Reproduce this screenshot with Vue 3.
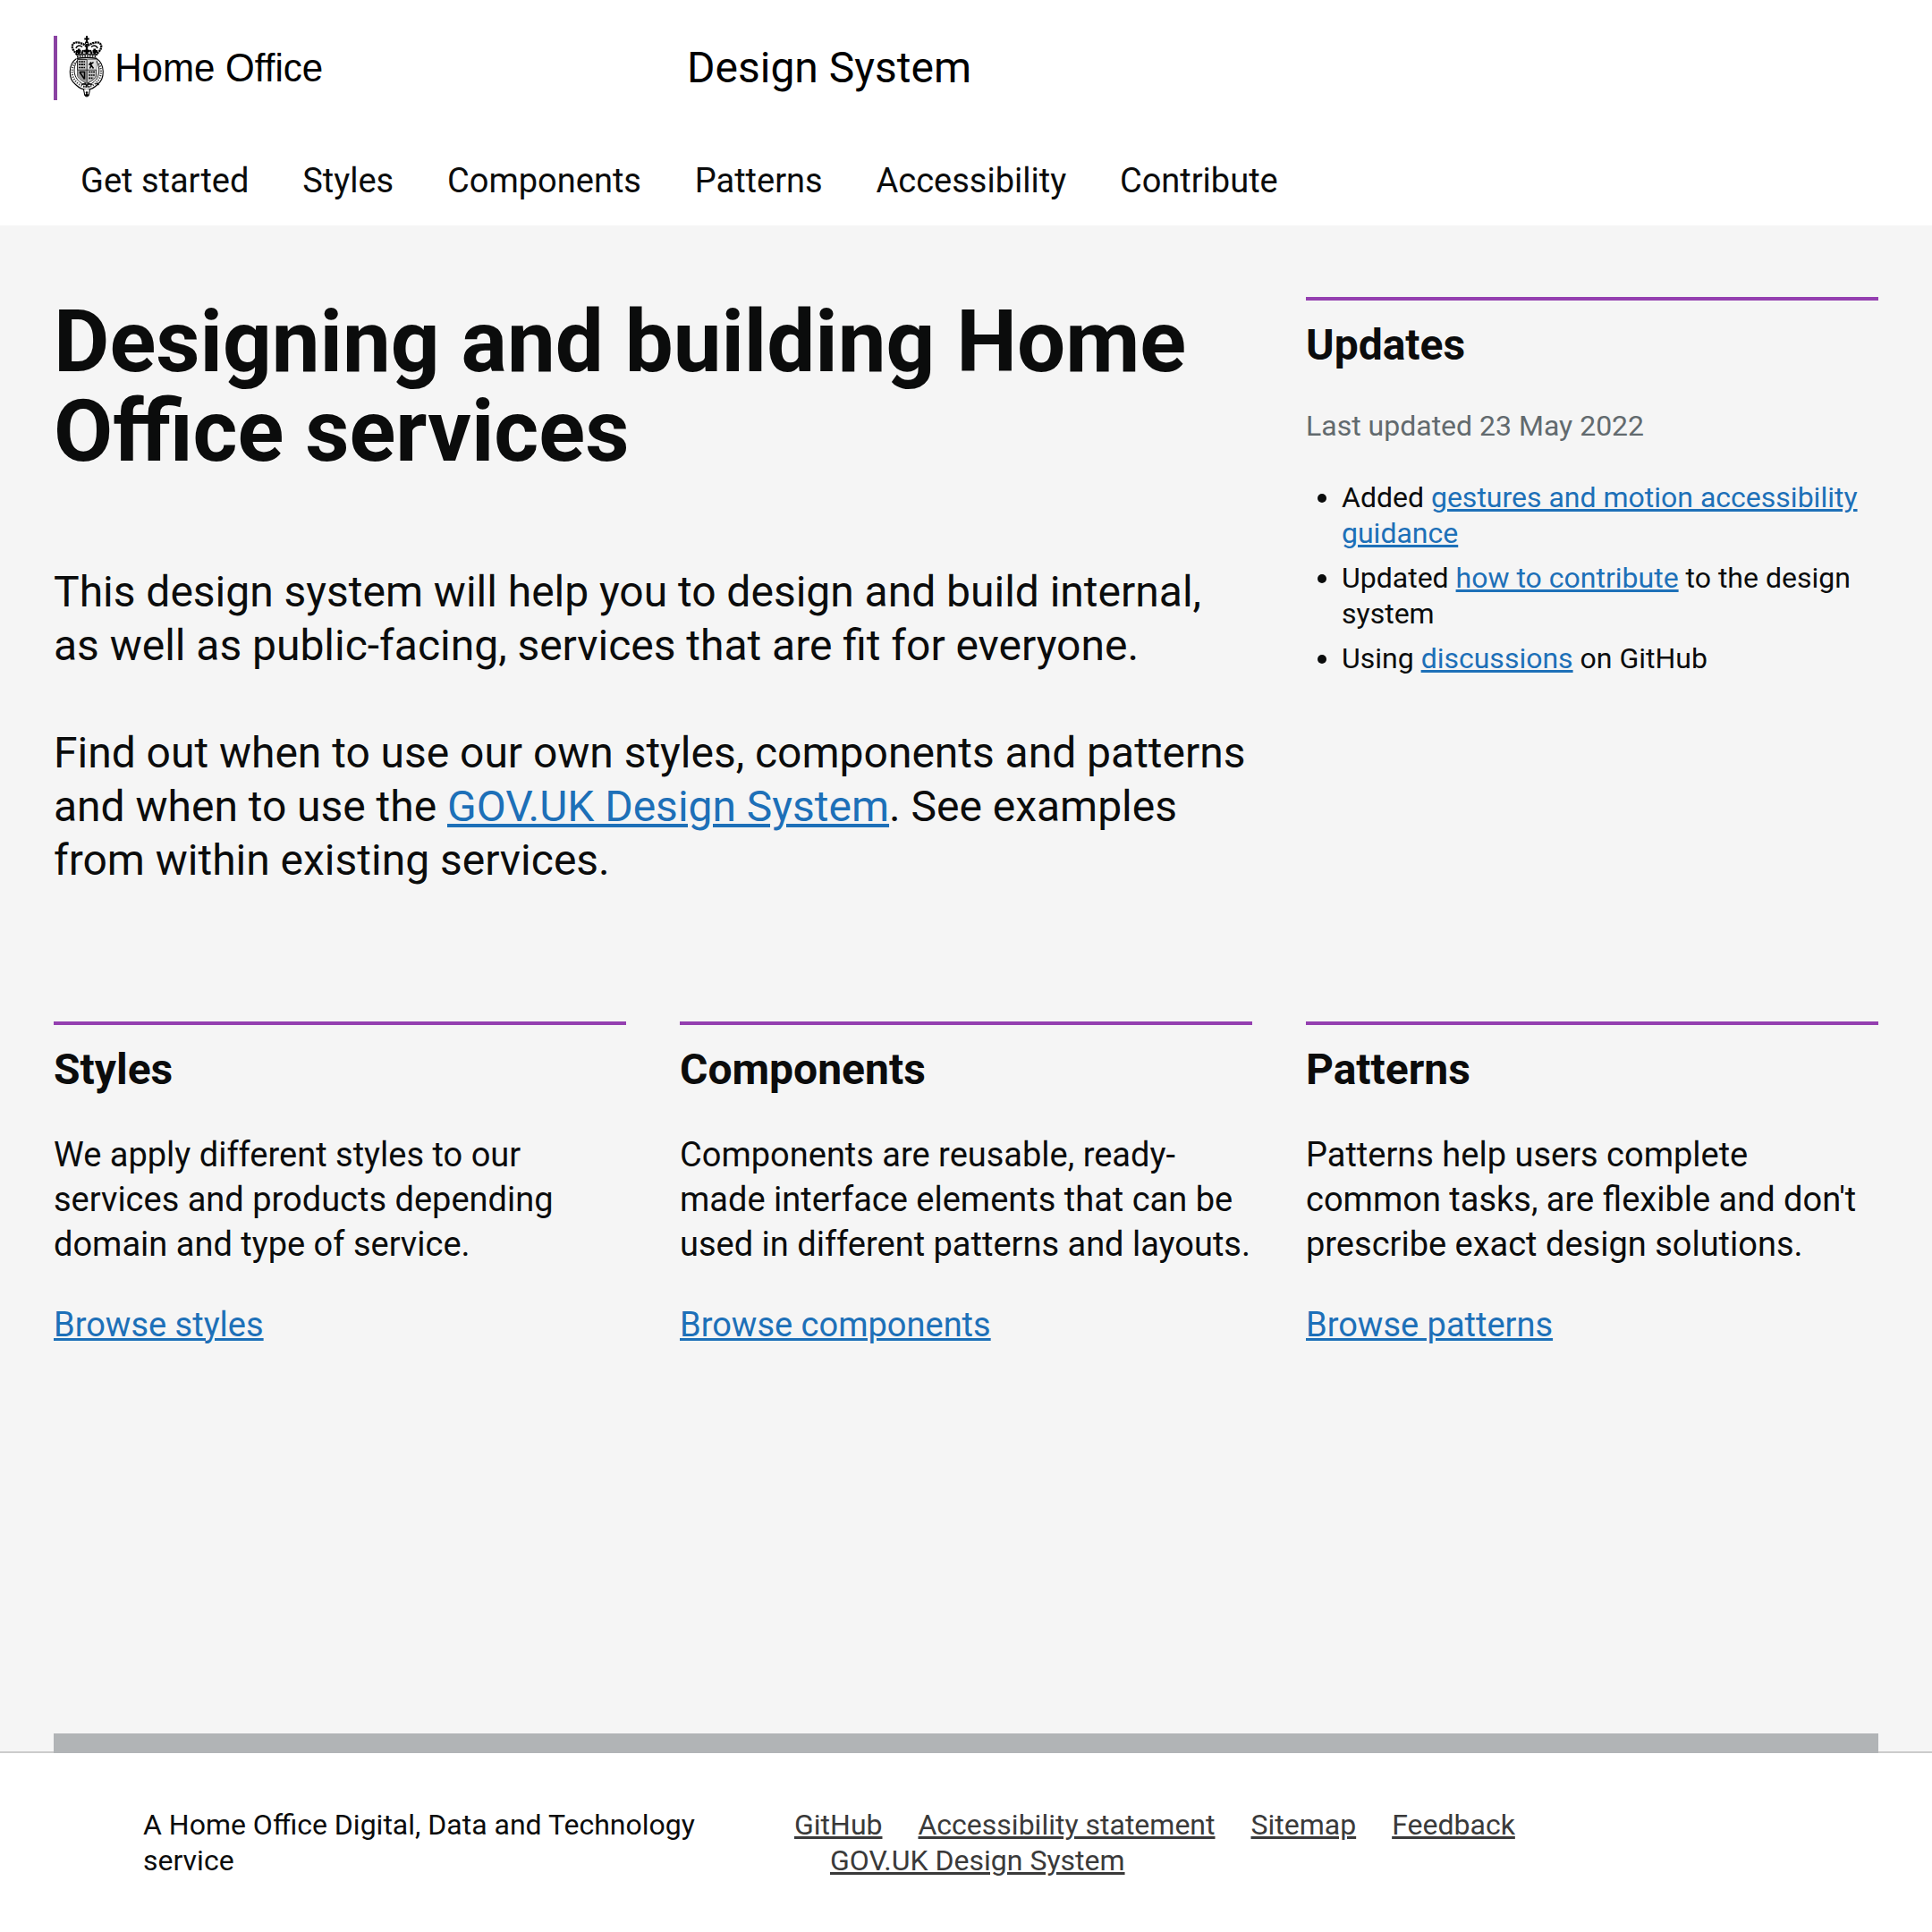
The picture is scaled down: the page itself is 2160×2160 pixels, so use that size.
<script setup>
const nav = ['Get started', 'Styles', 'Components', 'Patterns', 'Accessibility', 'Contribute']
const cards = [
  { title: 'Styles', text: 'We apply different styles to our services and products depending domain and type of service.', link: 'Browse styles' },
  { title: 'Components', text: 'Components are reusable, ready-made interface elements that can be used in different patterns and layouts.', link: 'Browse components' },
  { title: 'Patterns', text: "Patterns help users complete common tasks, are flexible and don't prescribe exact design solutions.", link: 'Browse patterns' }
]
const footerLinks = ['GitHub', 'Accessibility statement', 'Sitemap', 'Feedback', 'GOV.UK Design System']
</script>

<template>
  <div class="page">
    <header class="header">
      <div class="brand">
        <svg class="logo" width="304" height="72" viewBox="0 0 304 72" role="img" aria-label="Home Office">
          <rect width="4" height="72" fill="#8a42a2" />
          <g fill="none" stroke="#000">
            <!-- cross and orb -->
            <path d="M37 0v8M34.300 3.400h5.400" stroke-width="2" />
            <circle cx="37" cy="8.200" r="1.500" stroke-width="1.200" />
            <!-- crown arches -->
            <path d="M26 21C24 18 20.500 15.500 20.800 11.500C21 8 25 6.500 29 7.800C33 9 36 10.500 37 13C38 10.500 41 9 45 7.800C49 6.500 53 8 53.200 11.500C53.500 15.500 50 18 48 21" stroke-width="2.300" stroke-dasharray="2.200 .6" />
            <path d="M25 14C25.500 11 29 10 32 12.500M49 14C48.500 11 45 10 42 12.500M37 10v10" stroke-width="1.600" />
            <path d="M25 17.500h5.500M28.200 14.500v6M33.500 17.200h7M37 14.500v5.500M43.500 17.500h5.500M45.800 14.500v6" stroke-width="2.800" />
            <path d="M31.500 20l1.500-4M42.500 20l-1.500-4" stroke-width="2" />
            <!-- headband -->
            <path d="M25 21.300Q37 19.800 49 21.300M26 25.200Q37 23.800 48 25.200" stroke-width="1.500" />
            <path d="M26 23.300Q37 21.800 48 23.300" stroke-width="1.700" stroke-dasharray="1.600 1.200" />
            <!-- garter -->
            <path d="M25.500 25.500C16 32 16 48 24.500 54.500C28 58 33 60.200 37 60.200C41 60.200 45.500 58 49 54.500C57.500 48 57.500 32 48 25.500" stroke-width="1.100" />
            <path d="M23.500 30C18.500 38 20 48 27.500 53.500C33 58 41 58 46.500 53.500C53.500 48 55 38 50 30" stroke-width="2.200" stroke-dasharray="1.200 1.500" opacity=".75" />
            <path d="M26 28C21 37 22.500 46 29 51.500C34 56 40 56 45 51.500C51.500 46 52.500 37 48 28" stroke-width=".9" />
          </g>
          <!-- quartered shield -->
          <path d="M26.500 26.500H47.800V43C47.800 48.500 42 50.500 37.200 53.500C32.500 50.500 26.500 48.500 26.500 43Z" fill="#c4c4c4" stroke="#000" stroke-width=".8" />
          <path d="M37.200 26.500H47.800V38H37.200Z" fill="#dedede" />
          <path d="M26.500 38.500H37.200V53C32.500 50.500 26.500 48.500 26.500 43Z" fill="#999" />
          <g fill="none" stroke="#000">
            <path d="M28 29h7M28 32.200h7M28 35.500h7" stroke-width="1.700" stroke-dasharray="1.700 .7 2.500 .6" />
            <path d="M42 29.500l-2 2.500 2 1-1.500 3.500M41.500 32l3-2.500M42 33l2.500 3.500" stroke-width="1.500" />
            <path d="M39.300 40.500h7M39.300 44h6.500M39.300 47.300h5" stroke-width="1.700" stroke-dasharray="2 .7 1.500 .6" />
            <path d="M29 40.500L34.500 48.500M29 40.500h5.500v8" stroke-width="1.500" />
            <path d="M37.200 27v26M27 38.200h20.500" stroke-width=".7" />
            <!-- buckle and strap -->
            <path d="M31 55l4-2 2 3 2-3 4 2M33 57l8 0" stroke-width="1.100" />
            <path d="M33.500 60L34.800 66.500Q37 69.500 39.200 66.500L40.500 60" fill="#fff" stroke-width="1.100" />
            <path d="M47.500 53l3 2" stroke-width="1.500" />
          </g>
          <path d="M37 61.500l1.500 2.500h-1l1.700 2.500Q37 69 34.800 66.500L36.500 64h-1Z" fill="#000" />
          <text x="68.200" y="50.700" font-family="'Liberation Sans', Arial, sans-serif" font-size="43.500" textLength="233" lengthAdjust="spacingAndGlyphs">Home Office</text>
        </svg>
        <span class="product">Design System</span>
      </div>
      <nav class="nav">
        <a v-for="item in nav" :key="item" href="#">{{ item }}</a>
      </nav>
    </header>

    <main class="main">
      <div class="grid">
        <section class="intro">
          <h1>Designing and building Home Office services</h1>
          <p>This design system will help you to design and build internal, as well as public-facing, services that are fit for everyone.</p>
          <p>Find out when to use our own styles, components and patterns and when to use the <a class="link" href="#">GOV.UK Design System</a>. See examples from within existing services.</p>
        </section>
        <aside class="panel updates">
          <h2>Updates</h2>
          <p class="date">Last updated 23 May 2022</p>
          <ul>
            <li>Added <a class="link" href="#">gestures and motion accessibility guidance</a></li>
            <li>Updated <a class="link" href="#">how to contribute</a> to the design system</li>
            <li>Using <a class="link" href="#">discussions</a> on GitHub</li>
          </ul>
        </aside>
      </div>
      <div class="grid cards">
        <section v-for="card in cards" :key="card.title" class="panel">
          <h2>{{ card.title }}</h2>
          <p>{{ card.text }}</p>
          <p><a class="link" href="#">{{ card.link }}</a></p>
        </section>
      </div>
      <div class="rule"></div>
    </main>

    <footer class="footer">
      <p>A Home Office Digital, Data and Technology service</p>
      <ul>
        <li v-for="item in footerLinks" :key="item"><a href="#">{{ item }}</a></li>
      </ul>
    </footer>
  </div>
</template>

<style>
body {
  margin: 0;
}
</style>

<style scoped>
.page {
  display: flex;
  flex-direction: column;
  box-sizing: border-box;
  height: 2160px;
  background: #fff;
  color: #0b0c0c;
  font-family: Roboto, sans-serif;
  font-size: 38px;
  line-height: 50px;
}
h1, h2, p, ul {
  margin: 0;
  padding: 0;
}
.header {
  box-sizing: border-box;
  height: 252px;
  padding: 40px 60px 0;
}
.brand {
  display: flex;
  height: 72px;
}
.logo {
  flex: none;
  margin-right: 404px;
  overflow: visible;
}
.product {
  margin-top: 6px;
  color: #000;
  font-size: 48px;
  line-height: 60px;
}
.nav {
  display: flex;
  gap: 59.8px;
  padding: 65px 30px 0;
}
.nav a {
  color: inherit;
  text-decoration: none;
}
.main {
  display: flex;
  flex-direction: column;
  box-sizing: border-box;
  height: 1708px;
  padding: 80px 60px 0;
  background: #f5f5f5;
  border-bottom: 2px solid #ccc;
}
.grid {
  display: grid;
  grid-template-columns: repeat(3, 640px);
  column-gap: 60px;
}
.intro {
  grid-column: span 2;
  font-size: 48px;
  line-height: 60px;
}
.intro h1 {
  margin-bottom: 100px;
  font-size: 96px;
  font-weight: 700;
  line-height: 100px;
}
.intro p {
  word-spacing: -0.12px;
}
.intro p + p {
  margin-top: 60px;
}
.cards {
  margin-top: 150px;
}
.panel {
  padding-top: 20px;
  border-top: 4px solid #943fb0;
}
.panel h2 {
  font-size: 48px;
  font-weight: 700;
  line-height: 60px;
}
.panel p {
  margin-top: 40px;
}
.updates {
  font-size: 32px;
  line-height: 40px;
}
.updates .date {
  color: #626a6e;
}
.updates ul {
  margin-top: 40px;
  padding-left: 40px;
}
.updates li {
  margin-bottom: 10px;
}
.link {
  color: #1d70b8;
  text-decoration: underline;
  text-decoration-thickness: 3px;
  text-underline-offset: 2px;
}
.intro .link {
  text-decoration-thickness: 4px;
  text-underline-offset: 3px;
}
.rule {
  flex: none;
  height: 22px;
  margin-top: auto;
  margin-bottom: -2px;
  background: #b1b4b6;
}
.footer {
  display: flex;
  padding: 60px 160px;
  font-size: 32px;
  line-height: 40px;
}
.footer p {
  width: 640px;
  margin-right: 88px;
}
.footer ul {
  width: 840px;
  list-style: none;
}
.footer li {
  display: inline-block;
  margin-left: 40px;
}
.footer li:first-child {
  margin-left: 0;
}
.footer a {
  color: #3a3a3a;
  text-decoration-thickness: 3px;
  text-underline-offset: 2px;
}
</style>
